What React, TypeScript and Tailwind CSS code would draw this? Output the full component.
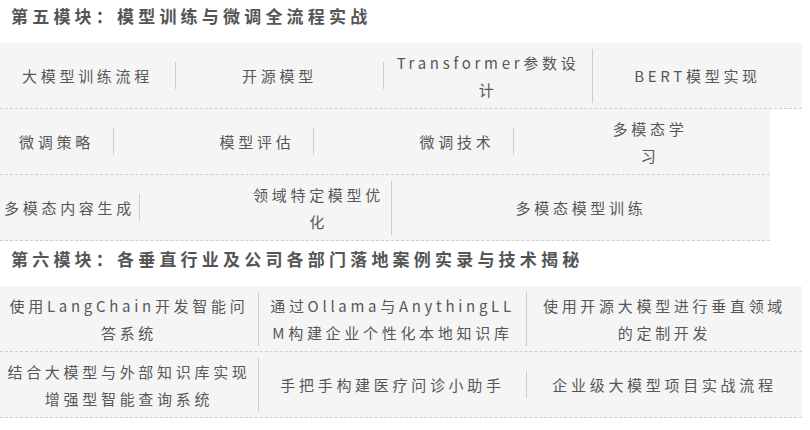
import React from 'react';

const font = { fontFamily: '"Noto Sans CJK SC", "Noto Sans", sans-serif' };

const Heading = ({ children, className = '' }: { children: React.ReactNode; className?: string }) => (
  <h2 className={`h-[32px] pl-[11px] text-[17px] leading-[32px] font-bold tracking-[4.2px] text-[#555] ${className}`}>
    {children}
  </h2>
);

const Cell = ({ children, className = '', sep = true }: { children: React.ReactNode; className?: string; sep?: boolean }) => (
  <div className={`text-center ${sep ? 'border-r border-[#ccc]' : ''} ${className}`}>{children}</div>
);

const Row = ({ children, className = '' }: { children: React.ReactNode; className?: string }) => (
  <div className={`flex h-[66px] items-center border-b border-dashed border-[#cfcfcf] bg-[#f5f5f5] ${className}`}>
    {children}
  </div>
);

export default function App() {
  return (
    <div style={font} className="w-[810px] h-[430px] bg-white overflow-hidden text-[15px] leading-[27px] tracking-[3.7px] text-[#575757]">
      {/* 第五模块 */}
      <Heading>第五模块：模型训练与微调全流程实战</Heading>
      <div className="mt-[11px]">
        <Row className="w-[802px]">
          <Cell className="w-[176px]">大模型训练流程</Cell>
          <Cell className="w-[208px]">开源模型</Cell>
          <Cell className="w-[209px]">Transformer参数设<br />计</Cell>
          <Cell sep={false} className="flex-1">BERT模型实现</Cell>
        </Row>
        <Row className="w-[770px]">
          <Cell className="w-[114px]">微调策略</Cell>
          <Cell className="ml-[87px] w-[113px]">模型评估</Cell>
          <Cell className="ml-[87px] w-[113px]">微调技术</Cell>
          <Cell sep={false} className="ml-[88px] w-[96px]">多模态学<br />习</Cell>
        </Row>
        <Row className="w-[770px]">
          <Cell className="w-[140px]">多模态内容生成</Cell>
          <Cell className="ml-[106px] w-[146px]">领域特定模型优<br />化</Cell>
          <Cell sep={false} className="flex-1">多模态模型训练</Cell>
        </Row>
      </div>

      {/* 第六模块 */}
      <Heading className="mt-[2px]">第六模块：各垂直行业及公司各部门落地案例实录与技术揭秘</Heading>
      <div className="mt-[11px]">
        <Row className="w-[802px]">
          <Cell className="w-[259px]">使用LangChain开发智能问<br />答系统</Cell>
          <Cell className="w-[268px]">通过Ollama与AnythingLL<br />M构建企业个性化本地知识库</Cell>
          <Cell sep={false} className="flex-1">使用开源大模型进行垂直领域<br />的定制开发</Cell>
        </Row>
        <Row className="w-[802px]">
          <Cell className="w-[259px]">结合大模型与外部知识库实现<br />增强型智能查询系统</Cell>
          <Cell className="w-[268px]">手把手构建医疗问诊小助手</Cell>
          <Cell sep={false} className="flex-1">企业级大模型项目实战流程</Cell>
        </Row>
      </div>
    </div>
  );
}
